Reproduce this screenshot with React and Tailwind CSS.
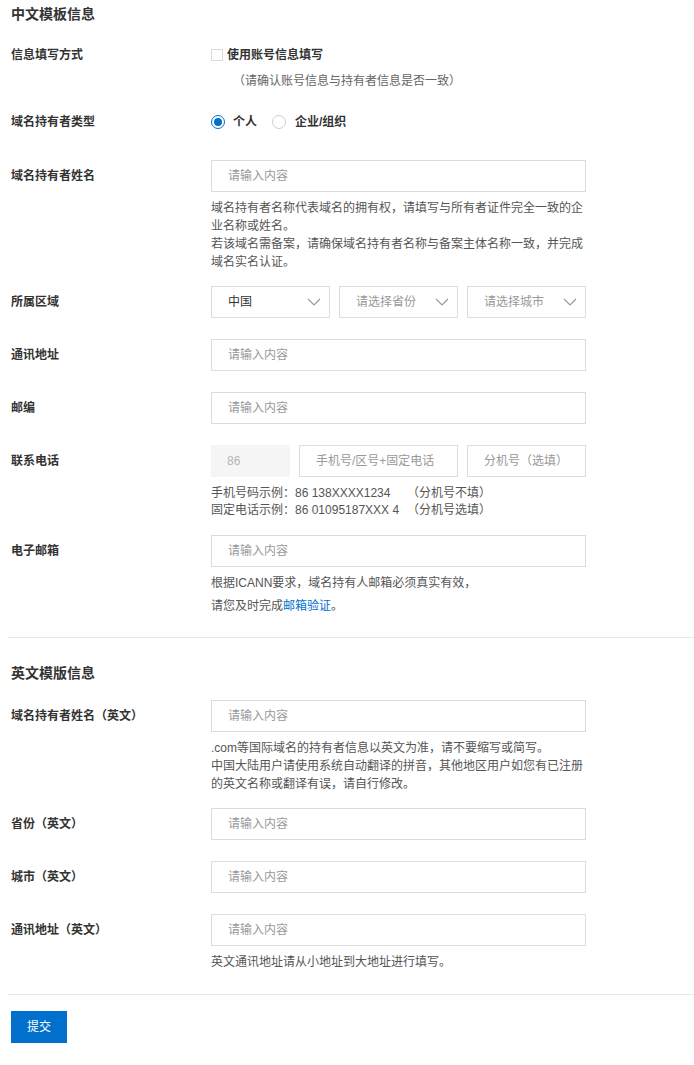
import React from "react";

const FONT = "font-['Liberation_Sans','Noto_Sans_CJK_SC',sans-serif]";

function Label({ children, lh = "leading-[32px]" }) {
  return (
    <div className={`w-[200px] shrink-0 text-[12px] font-semibold text-[#333] ${lh}`}>
      {children}
    </div>
  );
}

function Input({ placeholder = "请输入内容", className = "w-[375px]" }) {
  return (
    <div
      className={`h-[32px] border border-[#dcdcdc] bg-white pl-[16px] flex items-center text-[12px] text-[#999] ${className}`}
    >
      {placeholder}
    </div>
  );
}

function Chevron() {
  return (
    <svg width="14" height="8" viewBox="0 0 14 8" className="shrink-0">
      <polyline points="1,1 7,7 13,1" fill="none" stroke="#9a9a9a" strokeWidth="1.2" />
    </svg>
  );
}

function Select({ text, dark }) {
  return (
    <div className="h-[32px] w-[119px] border border-[#dcdcdc] bg-white pl-[16px] pr-[8px] flex items-center justify-between text-[12px]">
      <span className={dark ? "text-[#333]" : "text-[#999]"}>{text}</span>
      <Chevron />
    </div>
  );
}

function Help({ children, className = "" }) {
  return <div className={`text-[12px] text-[#555] leading-[18px] ${className}`}>{children}</div>;
}

export default function App() {
  return (
    <div className={`w-[694px] min-h-[1065px] bg-white pl-2 pt-1 ${FONT}`}>
      {/* Section 1 */}
      <div className="pl-[3px]">
        <div className="text-[14px] font-bold text-[#333] leading-[20px]">中文模板信息</div>

        <div className="flex mt-[21px]">
          <Label lh="leading-[20px]">信息填写方式</Label>
          <div>
            <div className="flex items-center h-[20px] gap-[4px]">
              <span className="w-[12px] h-[12px] border border-[#d9d9d9] bg-white"></span>
              <span className="text-[12px] font-semibold text-[#333]">使用账号信息填写</span>
            </div>
            <div className="mt-[6px] leading-[20px] text-[12px] text-[#666] pl-[22px]">
              （请确认账号信息与持有者信息是否一致）
            </div>
          </div>
        </div>

        <div className="flex mt-[21px]">
          <Label lh="leading-[20px]">域名持有者类型</Label>
          <div className="flex items-center h-[20px] text-[12px] font-semibold text-[#333]">
            <span className="w-[14px] h-[14px] rounded-full border border-[#0070cc] flex items-center justify-center">
              <span className="w-[8px] h-[8px] rounded-full bg-[#0070cc]"></span>
            </span>
            <span className="ml-[8px]">个人</span>
            <span className="ml-[15px] w-[14px] h-[14px] rounded-full border border-[#cfcfcf] bg-white"></span>
            <span className="ml-[9px]">企业/组织</span>
          </div>
        </div>

        <div className="flex mt-[28px]">
          <Label>域名持有者姓名</Label>
          <div className="w-[375px]">
            <Input />
            <Help className="mt-[7px]">
              域名持有者名称代表域名的拥有权，请填写与所有者证件完全一致的企业名称或姓名。
              <br />
              若该域名需备案，请确保域名持有者名称与备案主体名称一致，并完成域名实名认证。
            </Help>
          </div>
        </div>

        <div className="flex mt-[15px]">
          <Label>所属区域</Label>
          <div className="flex gap-[9px]">
            <Select text="中国" dark />
            <Select text="请选择省份" />
            <Select text="请选择城市" />
          </div>
        </div>

        <div className="flex mt-[21px]">
          <Label>通讯地址</Label>
          <Input />
        </div>

        <div className="flex mt-[21px]">
          <Label>邮编</Label>
          <Input />
        </div>

        <div className="flex mt-[21px]">
          <Label>联系电话</Label>
          <div>
            <div className="flex gap-[9px]">
              <div className="h-[32px] w-[79px] bg-[#f5f5f5] pl-[16px] flex items-center text-[12px] text-[#b5b5b5]">
                86
              </div>
              <Input placeholder="手机号/区号+固定电话" className="w-[159px]" />
              <Input placeholder="分机号（选填）" className="w-[119px]" />
            </div>
            <div className="mt-[8px] text-[12px] text-[#555] leading-[17px]">
              <div>
                <span className="inline-block w-[196px]">手机号码示例：86 138XXXX1234</span>
                <span>（分机号不填）</span>
              </div>
              <div>
                <span className="inline-block w-[196px]">固定电话示例：86 01095187XXX 4</span>
                <span>（分机号选填）</span>
              </div>
            </div>
          </div>
        </div>

        <div className="flex mt-[16px]">
          <Label>电子邮箱</Label>
          <div className="w-[375px]">
            <Input />
            <Help className="mt-[7px]">根据ICANN要求，域名持有人邮箱必须真实有效，</Help>
            <Help className="mt-[5px]">
              请您及时完成<span className="text-[#0070cc]">邮箱验证</span>。
            </Help>
          </div>
        </div>
      </div>

      <div className="mt-[22px] border-t border-[#e8e8e8]"></div>

      {/* Section 2 */}
      <div className="pl-[3px]">
        <div className="mt-[25px] text-[14px] font-bold text-[#333] leading-[20px]">英文模版信息</div>

        <div className="flex mt-[17px]">
          <Label>域名持有者姓名（英文）</Label>
          <div className="w-[375px]">
            <Input />
            <Help className="mt-[7px]">
              .com等国际域名的持有者信息以英文为准，请不要缩写或简写。
              <br />
              中国大陆用户请使用系统自动翻译的拼音，其他地区用户如您有已注册的英文名称或翻译有误，请自行修改。
            </Help>
          </div>
        </div>

        <div className="flex mt-[15px]">
          <Label>省份（英文）</Label>
          <Input />
        </div>

        <div className="flex mt-[21px]">
          <Label>城市（英文）</Label>
          <Input />
        </div>

        <div className="flex mt-[21px]">
          <Label>通讯地址（英文）</Label>
          <div className="w-[375px]">
            <Input />
            <Help className="mt-[7px]">英文通讯地址请从小地址到大地址进行填写。</Help>
          </div>
        </div>
      </div>

      <div className="mt-[23px] border-t border-[#e8e8e8]"></div>

      <div className="pl-[3px] mt-[16px]">
        <button className="w-[56px] h-[32px] bg-[#0070cc] text-white text-[12px] flex items-center justify-center">
          提交
        </button>
      </div>
    </div>
  );
}
